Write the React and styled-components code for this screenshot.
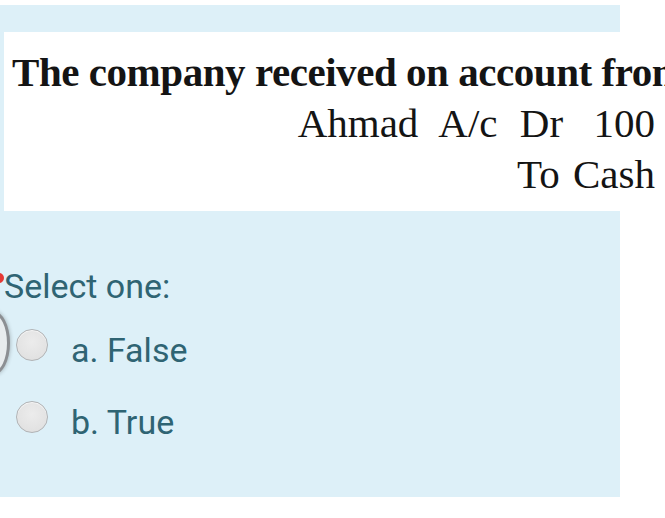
import styled, { createGlobalStyle } from 'styled-components';

const GlobalStyle = createGlobalStyle`
	html, body {
		margin: 0;
		padding: 0;
		background: #ffffff;
		overflow: hidden;
	}
`;

const Page = styled.div`
	width: 665px;
	height: 518px;
	padding-top: 5px;
	box-sizing: border-box;
	overflow: hidden;
	position: relative;
`;

const Panel = styled.div`
	position: relative;
	width: 620px;
	height: 492px;
	background-color: #ddf0f8;
	padding-top: 27px;
	box-sizing: border-box;
	display: flex;
	flex-direction: column;
`;

const QuestionImage = styled.div`
	margin-left: 4px;
	width: 661px;
	height: 179px;
	background: #ffffff;
	box-sizing: border-box;
	padding: 15px 10px 0 8px;
	overflow: hidden;
	font-family: 'Liberation Serif', 'Times New Roman', serif;
	color: #141414;
	display: flex;
	flex-direction: column;
`;

const Heading = styled.div`
	font-weight: bold;
	font-size: 41px;
	line-height: 51px;
	letter-spacing: -0.45px;
	white-space: nowrap;
`;

const EntryLine = styled.div`
	font-size: 41px;
	line-height: 51px;
	text-align: right;
	white-space: pre;
	word-spacing: ${(p) => p.$wordSpacing || 3}px;
`;

const Prompt = styled.div`
	position: relative;
	margin-top: 54px;
	padding-left: 4px;
	font-family: Roboto, 'Noto Sans', sans-serif;
	font-size: 34px;
	line-height: 42px;
	color: #2f6473;

	&::before {
		content: '';
		position: absolute;
		left: -6px;
		top: 8px;
		width: 10px;
		height: 10px;
		border-radius: 50%;
		background: #e53935;
	}
`;

const Options = styled.div`
	position: relative;
	margin-top: 22px;
	display: flex;
	flex-direction: column;
	gap: 40px;

	&::before {
		content: '';
		position: absolute;
		left: -24px;
		top: -18px;
		width: 28px;
		height: 58px;
		border-radius: 50%;
		border: 3px solid #8c8f93;
		box-shadow: 0 0 4px rgba(0, 0, 0, 0.3);
		background: #e8ecee;
	}
`;

const Option = styled.label`
	display: flex;
	align-items: center;
	height: 32px;
	padding-left: 16px;
	gap: 23px;
	font-family: Roboto, 'Noto Sans', sans-serif;
	font-size: 34px;
	color: #2f6473;
`;

const OptionText = styled.span`
	position: relative;
	top: 5px;
`;

const Radio = styled.span`
	width: 32px;
	height: 32px;
	box-sizing: border-box;
	border-radius: 50%;
	border: 1.5px solid #b1b3b5;
	background: radial-gradient(circle at 50% 40%, #ececec 0%, #e2e2e2 70%, #d8d8d8 100%);
	box-shadow: inset 0 1px 1px rgba(255, 255, 255, 0.8);
	flex-shrink: 0;
`;

const options = ['a. False', 'b. True'];

export default function App() {
	return (
		<>
			<GlobalStyle />
			<Page>
				<Panel>
					<QuestionImage>
						<Heading>The company received on account from</Heading>
						<EntryLine $wordSpacing={12}>{'Ahmad A/c Dr \u2009100'}</EntryLine>
						<EntryLine>To Cash</EntryLine>
					</QuestionImage>
					<Prompt>Select one:</Prompt>
					<Options>
						{options.map((o) => (
							<Option key={o}>
								<Radio />
								<OptionText>{o}</OptionText>
							</Option>
						))}
					</Options>
				</Panel>
			</Page>
		</>
	);
}
